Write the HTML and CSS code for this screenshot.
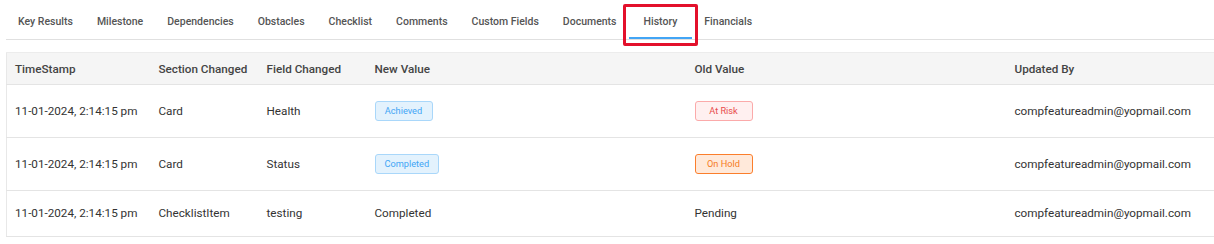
FILE: index.html
```
<!DOCTYPE html>
<html>
<head>
<meta charset="utf-8">
<title>History</title>
<link rel="stylesheet" href="styles.css">
</head>
<body>
<div class="tabs">
  <span class="tab">Key Results</span>
  <span class="tab">Milestone</span>
  <span class="tab">Dependencies</span>
  <span class="tab">Obstacles</span>
  <span class="tab">Checklist</span>
  <span class="tab">Comments</span>
  <span class="tab">Custom Fields</span>
  <span class="tab">Documents</span>
  <span class="tab active">History<i class="mark"></i></span>
  <span class="tab">Financials</span>
</div>

<table class="grid">
  <colgroup>
    <col class="c1"><col class="c2"><col class="c3"><col class="c4"><col class="c5"><col>
  </colgroup>
  <thead>
    <tr>
      <th>TimeStamp</th>
      <th>Section Changed</th>
      <th>Field Changed</th>
      <th>New Value</th>
      <th>Old Value</th>
      <th>Updated By</th>
    </tr>
  </thead>
  <tbody>
    <tr class="pill">
      <td>11-01-2024, 2:14:15 pm</td>
      <td>Card</td>
      <td>Health</td>
      <td><span class="tag blue">Achieved</span></td>
      <td><span class="tag red">At Risk</span></td>
      <td>compfeatureadmin@yopmail.com</td>
    </tr>
    <tr class="pill">
      <td>11-01-2024, 2:14:15 pm</td>
      <td>Card</td>
      <td>Status</td>
      <td><span class="tag blue">Completed</span></td>
      <td><span class="tag orange">On Hold</span></td>
      <td>compfeatureadmin@yopmail.com</td>
    </tr>
    <tr>
      <td>11-01-2024, 2:14:15 pm</td>
      <td>ChecklistItem</td>
      <td>testing</td>
      <td>Completed</td>
      <td>Pending</td>
      <td>compfeatureadmin@yopmail.com</td>
    </tr>
  </tbody>
</table>
</body>
</html>
```

FILE: styles.css
```
*{margin:0;padding:0;box-sizing:border-box;}
body{font-family:Roboto,"Liberation Sans",sans-serif;background:#fff;color:#333;overflow:hidden;width:1214px;}

.tabs{display:flex;margin-left:6px;height:40px;border-bottom:1px solid #e0e0e0;}
.tab{position:relative;padding:15px 12px 0;font-size:10.5px;font-weight:500;color:#555;height:39px;}
.tab.active{padding:15px 15px 0;border-bottom:2px solid #42a5f5;}
.mark{position:absolute;left:-6px;right:-6px;top:4px;height:42px;border:3px solid #e3102b;border-radius:2px;}

.grid{margin:12px 0 0 6px;width:1230px;border-collapse:collapse;table-layout:fixed;font-size:11.7px;border-left:1px solid #e8e8e8;}
.c1{width:144px;}
.c2{width:108px;}
.c3{width:108px;}
.c4{width:320px;}
.c5{width:320px;}
.grid th{background:#f5f5f5;text-align:left;font-weight:500;color:#444;padding:9px 8px 8px;line-height:14px;border-top:1px solid #ececec;border-bottom:1px solid #e4e4e4;}
.grid td{padding:15px 8px 16px;line-height:14px;border-bottom:1px solid #e4e4e4;white-space:nowrap;}
.grid .pill td{padding:16px 8px;}

.tag{display:inline-block;min-width:58px;text-align:center;font-size:9.2px;line-height:18px;height:20px;padding:0 9px;border:1px solid;border-radius:3px;vertical-align:middle;}
.blue{background:#e3f2fd;border-color:#a9d7fa;color:#42a5f5;}
.red{background:#fff0f0;border-color:#fbaaaa;color:#e84c4c;}
.orange{background:#ffe9da;border-color:#fb7e2c;color:#f57c1f;}
```
